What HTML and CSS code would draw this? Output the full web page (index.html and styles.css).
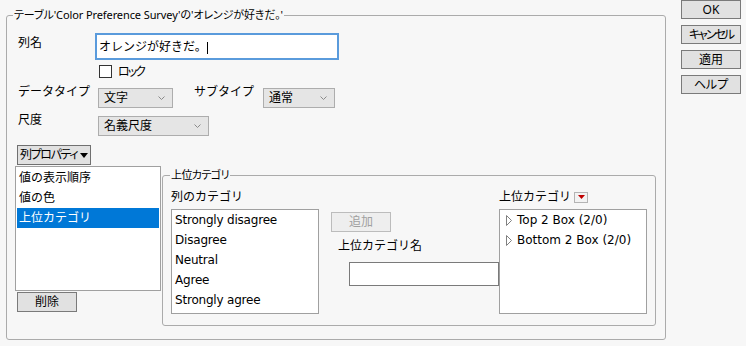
FILE: index.html
```html
<!DOCTYPE html>
<html lang="ja">
<head>
<meta charset="utf-8">
<link rel="stylesheet" href="styles.css">
</head>
<body>
<div class="dialog">
  <div class="group outer">
    <span class="legend">テーブル'Color Preference Survey'の'オレンジが好きだ。'</span>
    <div class="row name-row">
      <span class="lbl">列名</span>
      <div class="textbox">オレンジが好きだ。<span class="caret"></span></div>
    </div>
    <div class="row lock-row">
      <span class="check"></span><span class="lock-lbl">ロック</span>
    </div>
    <div class="row type-row">
      <span class="lbl">データタイプ</span>
      <div class="select w74"><span>文字</span><svg class="chev" width="7" height="4" viewBox="0 0 7 4"><polyline points="0.5,0.5 3.5,3.5 6.5,0.5" fill="none" stroke="#8a8a8a" stroke-width="1"/></svg></div>
      <span class="lbl2">サブタイプ</span>
      <div class="select w71"><span>通常</span><svg class="chev" width="7" height="4" viewBox="0 0 7 4"><polyline points="0.5,0.5 3.5,3.5 6.5,0.5" fill="none" stroke="#8a8a8a" stroke-width="1"/></svg></div>
    </div>
    <div class="row scale-row">
      <span class="lbl">尺度</span>
      <div class="select w110"><span>名義尺度</span><svg class="chev" width="7" height="4" viewBox="0 0 7 4"><polyline points="0.5,0.5 3.5,3.5 6.5,0.5" fill="none" stroke="#8a8a8a" stroke-width="1"/></svg></div>
    </div>
    <div class="menu-btn"><span class="menu-txt">列プロパティ</span><svg width="8" height="5" viewBox="0 0 8 5"><polygon points="0,0 8,0 4,5" fill="#000"/></svg></div>
    <div class="props">
      <div class="left-col">
        <div class="list proplist">
          <div class="item">値の表示順序</div>
          <div class="item">値の色</div>
          <div class="item selected">上位カテゴリ</div>
        </div>
        <div class="btn del">削除</div>
      </div>
      <div class="group inner">
        <span class="legend legend2">上位カテゴリ</span>
        <div class="cols">
          <div class="col1">
            <div class="clbl">列のカテゴリ</div>
            <div class="list catlist">
              <div class="item">Strongly disagree</div>
              <div class="item">Disagree</div>
              <div class="item">Neutral</div>
              <div class="item">Agree</div>
              <div class="item">Strongly agree</div>
            </div>
          </div>
          <div class="col2">
            <div class="btn add">追加</div>
            <div class="namelbl">上位カテゴリ名</div>
            <div class="nameinput"></div>
          </div>
          <div class="col3">
            <div class="clbl hdr"><span>上位カテゴリ</span><span class="redbtn"><svg width="7" height="4" viewBox="0 0 7 4"><polygon points="0,0 7,0 3.5,4" fill="#c00000"/></svg></span></div>
            <div class="list toplist">
              <div class="item"><svg class="tri" width="6" height="11" viewBox="0 0 6 11"><polygon points="0.5,0.5 5.5,5.5 0.5,10.5" fill="#fff" stroke="#808080" stroke-width="1"/></svg><span>Top 2 Box (2/0)</span></div>
              <div class="item"><svg class="tri" width="6" height="11" viewBox="0 0 6 11"><polygon points="0.5,0.5 5.5,5.5 0.5,10.5" fill="#fff" stroke="#808080" stroke-width="1"/></svg><span>Bottom 2 Box (2/0)</span></div>
            </div>
          </div>
        </div>
      </div>
    </div>
  </div>
  <div class="buttons">
    <div class="btn">OK</div>
    <div class="btn"><span class="cancel">キャンセル</span></div>
    <div class="btn">適用</div>
    <div class="btn">ヘルプ</div>
  </div>
</div>
</body>
</html>
```
FILE: styles.css
```css
html, body {
  margin: 0;
  padding: 0;
}
body {
  background: #f7f7f7;
  color: #000;
  font-family: "Noto Sans", "Noto Sans CJK JP", sans-serif;
  font-size: 12px;
  line-height: 16px;
  width: 746px;
  height: 346px;
  overflow: hidden;
}
.dialog {
  display: flex;
  align-items: flex-start;
}
.group {
  position: relative;
  box-sizing: border-box;
  border: 1px solid #ababab;
  border-radius: 3px;
}
.legend {
  position: absolute;
  top: -9px;
  left: 6px;
  padding: 0 1px;
  background: #f7f7f7;
  white-space: nowrap;
  line-height: 16px;
  font-size: 11px;
  font-feature-settings: "palt";
  letter-spacing: -0.1px;
}
.legend2 {
  left: 7px;
  letter-spacing: -0.6px;
}
.outer {
  margin: 15px 0 0 6px;
  width: 660px;
  height: 325px;
  padding: 17px 8px 0 8px;
}
.row {
  display: flex;
  align-items: flex-start;
  white-space: nowrap;
}
.lbl {
  margin-left: 3px;
}
.name-row .lbl {
  width: 77px;
  margin-top: 2px;
}
.textbox {
  box-sizing: border-box;
  width: 244px;
  height: 27px;
  border: 2px solid #5a9bdc;
  background: #fff;
  padding: 4px 0 0 2px;
  white-space: nowrap;
}
.caret {
  display: inline-block;
  width: 1px;
  height: 12px;
  background: #000;
  vertical-align: top;
  margin: 3px 0 0 0;
}
.lock-row {
  margin: 5px 0 0 84px;
  align-items: center;
}
.check {
  box-sizing: border-box;
  width: 13px;
  height: 13px;
  border: 1px solid #333;
  background: #fff;
  margin-right: 6px;
}
.lock-lbl {
  line-height: 13px;
  font-feature-settings: "palt";
  letter-spacing: -2px;
}
.type-row {
  margin-top: 10px;
}
.type-row .lbl, .scale-row .lbl {
  width: 80px;
  margin-top: -4px;
}
.lbl2 {
  margin-left: 21px;
  width: 69px;
  margin-top: -4px;
}
.select {
  box-sizing: border-box;
  height: 20px;
  border: 1px solid #adadad;
  background: #e5e5e5;
  display: flex;
  align-items: center;
  justify-content: space-between;
  padding: 0 7px 0 5px;
}
.w74 { width: 75px; }
.w71 { width: 72px; }
.w110 { width: 111px; }
.scale-row {
  margin-top: 8px;
}
.menu-btn {
  box-sizing: border-box;
  margin: 9px 0 0 2px;
  width: 74px;
  height: 20px;
  border: 1px solid #707070;
  background: #e1e1e1;
  display: flex;
  align-items: center;
  gap: 3px;
  padding-left: 2px;
  white-space: nowrap;
}
.menu-txt {
  font-feature-settings: "palt";
  letter-spacing: -1.4px;
}
.props {
  display: flex;
  align-items: flex-start;
  margin-top: 1px;
}
.left-col {
  width: 146px;
}
.list {
  box-sizing: border-box;
  border: 1px solid #a0a0a0;
  background: #fff;
}
.item {
  line-height: 20px;
  height: 20px;
  white-space: nowrap;
}
.proplist {
  width: 146px;
  height: 125px;
  padding: 1px;
}
.proplist .item {
  padding-left: 2px;
}
.selected {
  background: #0078d7;
  color: #fff;
}
.btn {
  box-sizing: border-box;
  width: 60px;
  height: 19px;
  border: 1px solid #7a7a7a;
  background: #e1e1e1;
  text-align: center;
  line-height: 17px;
  white-space: nowrap;
}
.buttons .btn {
  font-feature-settings: "palt";
}
.cancel {
  letter-spacing: -2px;
}
.del {
  margin: 1px 0 0 2px;
  height: 20px;
  line-height: 18px;
}
.inner {
  margin: 9px 0 0 1px;
  width: 494px;
  height: 151px;
  padding: 13px 0 0 8px;
}
.cols {
  display: flex;
  align-items: flex-start;
}
.col1 {
  width: 148px;
}
.clbl {
  height: 16px;
  white-space: nowrap;
}
.catlist {
  margin-top: 4px;
  width: 148px;
  height: 105px;
  padding-left: 3px;
  font-family: "DejaVu Sans", "Noto Sans CJK JP", sans-serif;
  letter-spacing: -0.2px;
}
.col2 {
  width: 168px;
  margin-left: 12px;
}
.add {
  margin-top: 23px;
  height: 20px;
  line-height: 18px;
  border-color: #bcbcbc;
  background: #eeeeee;
  color: #a0a0a0;
}
.namelbl {
  margin: 6px 0 0 7px;
  white-space: nowrap;
}
.nameinput {
  box-sizing: border-box;
  margin: 8px 0 0 18px;
  width: 150px;
  height: 24px;
  border: 1px solid #7a7a7a;
  background: #fff;
}
.col3 {
  width: 148px;
}
.hdr {
  display: flex;
  align-items: center;
}
.redbtn {
  box-sizing: border-box;
  margin-left: 3px;
  width: 14px;
  height: 11px;
  border: 1px solid #b4b4b4;
  background: #f3f3f3;
  display: flex;
  align-items: center;
  justify-content: center;
}
.toplist {
  margin-top: 4px;
  width: 148px;
  height: 105px;
  padding-left: 6px;
  font-family: "DejaVu Sans", "Noto Sans CJK JP", sans-serif;
}
.toplist .item {
  display: flex;
  align-items: center;
  gap: 5px;
}
.buttons {
  margin: 0 0 0 15px;
  display: flex;
  flex-direction: column;
  gap: 6px;
}
```
